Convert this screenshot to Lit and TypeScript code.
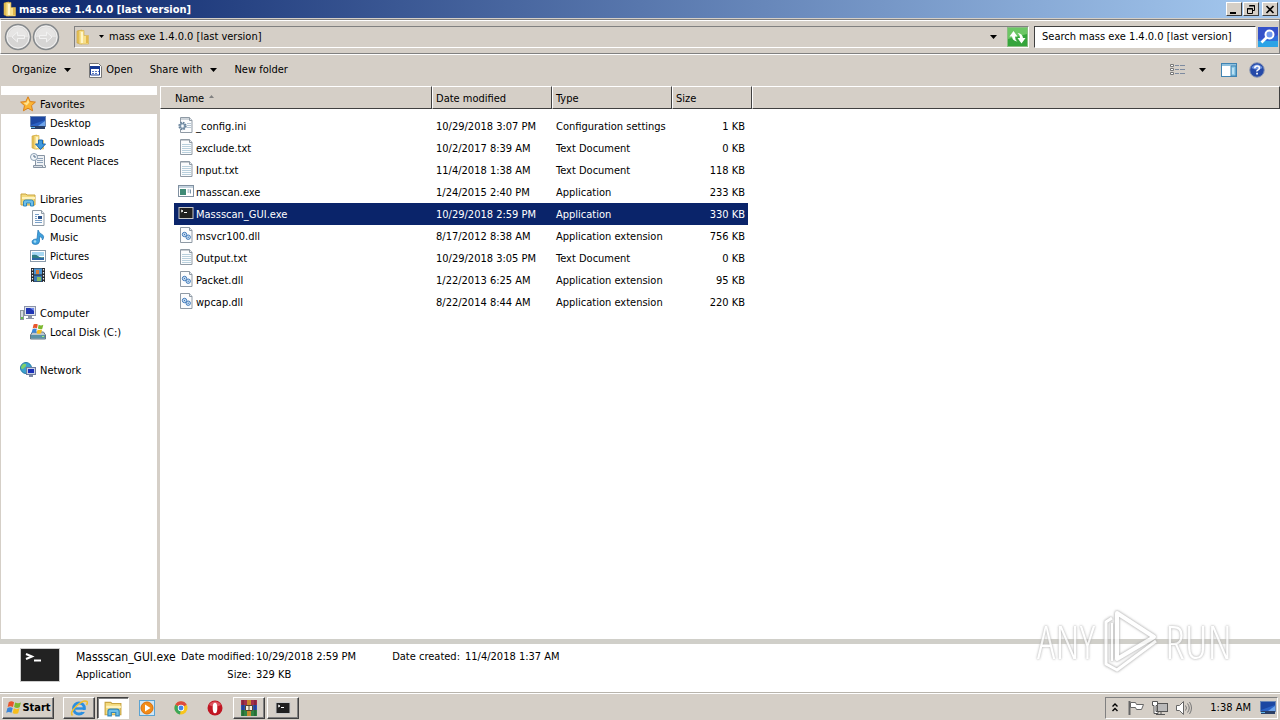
import { LitElement, html, svg, css, TemplateResult } from "lit";
import { customElement, state } from "lit/decorators.js";
import { classMap } from "lit/directives/class-map.js";

const box = (w: number, h: number, body: unknown, vb?: string) => html`<svg
  width=${w} height=${h} viewBox=${vb ?? `0 0 ${w} ${h}`} aria-hidden="true">${body}</svg>`;

const page = svg`
  <path d="M2.500.5h9l2.500 3v12h-11.500z" fill="#fbfcfd" stroke="#8f9aa5"/>
  <path d="M11.500.5v3h2.500" fill="#e4e9ee" stroke="#8f9aa5"/>`;
const folder = svg`
  <path d="M2 2l5-1v14l-5-1z" fill="#e9c75c" stroke="#c99f35" stroke-width=".6"/>
  <path d="M4 1.500h5v5h4.500v8.500h-9.500z" fill="#f7e08c" stroke="#d3ac45" stroke-width=".6"/>
  <path d="M6 3h2v11h-2z" fill="#fff6c9"/><path d="M11 7h2v7h-2z" fill="#e3b94c"/>`;
const monitor = svg`
  <rect x=".5" y="1.500" width="15" height="10" fill="#2b62c4" stroke="#6b87b5"/>
  <path d="M1 2h14v3l-14 5z" fill="#1c47a2"/><path d="M8 11l7-5v5z" fill="#6fa5ec"/>
  <path d="M1 11h14v3h-14z" fill="#2a3f66"/><path d="M1 12h4v1h-4z" fill="#5fb4e8"/>`;
const flag = svg`
  <path d="M3 3c2-1.500 3.500-1 5 0l-1 4.500c-2-1-3-1-5 0z" fill="#e8552b"/>
  <path d="M9 3.300c2 1 3.500 1 5.500 0l-1.200 4.500c-2 1-3.500 .8-5.200-.2z" fill="#7cb82f"/>
  <path d="M1.800 8.500c2-1.200 3.300-1 5 0l-1.200 4.500c-1.800-1-3-1-5 0z" fill="#3b86d8"/>
  <path d="M7.800 8.800c1.800 1 3.300 1 5.300 0l-1.200 4.500c-2 1-3.500 .8-5.200-.2z" fill="#f7be1c"/>`;
const library = svg`
  <path d="M1 3h5l1 1h8v10h-14z" fill="#f3da7c" stroke="#c9a441"/>
  <path d="M2 6h13v2h-13z" fill="#fff3bd"/>
  <path d="M3.500 15v-4q0-2 2-2h6q2 0 2 2v4h-3v-3h-4v3z" fill="#6dbfe9" stroke="#3287bb"/>`;
const round = svg`
  <circle cx="14" cy="14" r="12.500" fill="#cfcecd" stroke="#85898c" stroke-width="1.500"/>
  <circle cx="14" cy="14" r="11" fill="#d6d5d4" stroke="#f3f3f3"/>
  <path d="M4 14a10 10 0 0 1 20 0z" fill="#e6e5e4"/>
  <path d="M8 14l5.500-5v3.500h7v3h-7v3.500z" fill="#dedddc" stroke="#f2f2f2"/>`;

const icons: Record<string, () => TemplateResult> = {
  folder: () => box(16, 16, folder),
  star: () => box(16, 16, svg`<path d="M8 .8l2.200 4.700 5.200.6-3.900 3.500 1.100 5.200-4.600-2.600-4.600 2.600 1.100-5.200-3.900-3.500 5.200-.6z" fill="#fbb534" stroke="#d9801d"/><path d="M8 3l1.300 3.500-2.600 3-3-2.500 3-.6z" fill="#ffe391"/>`),
  desktop: () => box(16, 16, monitor),
  downloads: () => box(16, 16, svg`${folder}<path d="M8.500 6h4v4h3l-5 5.500-5-5.500h3z" fill="#3f9ade" stroke="#1d66ab"/>`),
  recent: () => box(16, 16, svg`<path d="M5.500 2.500h9v10h1v2h-10z" fill="#eef1f4" stroke="#8794a3"/><path d="M7 5.500h6m-6 2h6m-6 2h6" stroke="#8fa3ba"/><path d="M3.500 12.500h9v2h-9z" fill="#d9dfe6" stroke="#8794a3"/><circle cx="4" cy="4" r="3.500" fill="#f3f7fa" stroke="#8b9fb3"/><path d="M4 2v2h2" fill="none" stroke="#506a86"/>`),
  library: () => box(16, 16, library),
  documents: () => box(16, 16, svg`${page}<path d="M5 4.500h4M5 6.500h2m-2 2h2m-2 2h7m-7 2h7" stroke="#7aa0c8"/><path d="M8 6h4v3h-4z" fill="#2d548c"/>`),
  music: () => box(16, 16, svg`<path d="M8 1q1 3 4 4.500t.5 5.500q0-3-3-3.500v5q-.5 3-4 3t-3.500-2.500q0-3 5-3z" fill="#3ea0dc" stroke="#1f72b4" stroke-width=".7"/><circle cx="5" cy="12.500" r="1.300" fill="#a5dcf5"/>`),
  pictures: () => box(16, 16, svg`<rect x=".5" y="2.500" width="15" height="11" fill="#fff" stroke="#8a9bab"/><path d="M2 4h12v4h-12z" fill="#a6d7f2"/><path d="M2 7q4-1 6 1t6 1v3h-12z" fill="#2f7d82"/><path d="M2 10h12v2h-12z" fill="#2d67a6"/>`),
  videos: () => box(16, 16, svg`<path d="M1 1h14v14h-14z" fill="#25282e"/><path d="M4 1.500h8v6h-8z" fill="#4b95d4"/><path d="M4 8.500h8v6h-8z" fill="#3a78b6"/><path d="M6 3h3v4h-3z" fill="#d47c3c"/><path d="M7 10h4v4h-4z" fill="#86bb61"/><path d="M2.500 2v13M13.500 2v13" stroke="#e9eef2" stroke-width="1.200" stroke-dasharray="1.500 1.500"/>`),
  computer: () => box(16, 16, svg`<rect x="4.500" y="1.500" width="11" height="9" fill="#dfe4ee" stroke="#8b93a8"/><path d="M6 3h8v6h-8z" fill="#2035b4"/><path d="M10 3h4v3z" fill="#6d86ea"/><path d="M8 11h4v2h2v1h-8v-1h2z" fill="#8b93a8"/><rect x=".5" y="5.500" width="3" height="9" fill="#d5dbe0" stroke="#8d969e"/><path d="M1 12h2v2h-2z" fill="#64b84f"/>`),
  disk: () => box(16, 16, svg`<path d="M.5 11l2-3h11l2 3v4h-15z" fill="#bcc7d0" stroke="#647683"/><path d="M1 11h14v3.500h-14z" fill="#5b92a6"/><path d="M12 12h2v1h-2z" fill="#9df27a"/><g transform="translate(1 -2) scale(.85)">${flag}</g>`),
  network: () => box(16, 16, svg`<circle cx="6" cy="6" r="5.500" fill="#3da2cf" stroke="#267aa6"/><path d="M3 2q4-1 3 2l-3 3q-3 0-1.500-3zM7 6l3 1v3l-3 1z" fill="#7fd06a"/><rect x="6.500" y="5.500" width="9" height="7" fill="#c9d2e6" stroke="#6d7a9c"/><path d="M8 7h6v4h-6z" fill="#1a2fb8"/><path d="M9 13h4v2h-4z" fill="#7b88a5"/>`),
  ini: () => box(16, 16, svg`${page}<path d="M9 6.500h4m-4 2h4m-4 2h4" stroke="#b4c5d3"/><path d="M4 1v2m2-2v2m2-2v2m2-2v2" stroke="#a1adb8"/><circle cx="4.500" cy="9" r="3.200" fill="#dce6ee" stroke="#67829b" stroke-width="2" stroke-dasharray="1.600 .9"/><circle cx="4.500" cy="9" r="2.400" fill="#c8d6e2" stroke="#67829b"/><circle cx="4.500" cy="9" r="1" fill="#fff"/>`),
  txt: () => box(16, 16, svg`${page}<path d="M4 5.500h9m-9 2h9m-9 2h9m-9 2h9m-9 2h9" stroke="#b9d0dd"/><path d="M4 0v2m2-2v2m2-2v2m2-2v2" stroke="#909ba5"/>`),
  app: () => box(16, 16, svg`<rect x=".5" y="2.500" width="15" height="11" fill="#fff" stroke="#8090a0"/><path d="M1 3h14v2h-14z" fill="#c5d3df"/><path d="M2 6h6v6h-6z" fill="#3f8a75"/><path d="M9.500 7h2m-2 2h2m1-2.500v4" stroke="#7f98ad"/>`),
  console: () => box(16, 16, svg`<rect x="1" y="2.500" width="14" height="11" fill="#202020" stroke="#c8c8c8"/><path d="M3 5l2 1-2 1" fill="none" stroke="#fff"/><path d="M6 7.500h3" stroke="#fff"/>`),
  dll: () => box(16, 16, svg`${page}<g fill="#cfe3f5" stroke="#3f79ba"><circle cx="6.500" cy="7.500" r="2.200"/><circle cx="10.200" cy="10.200" r="2.200"/></g><circle cx="6.500" cy="7.500" r=".7" fill="#3f79ba"/><circle cx="10.200" cy="10.200" r=".7" fill="#3f79ba"/>`),
  open: () => box(15, 16, svg`<path d="M1.500 1.500h9l3 3v11h-12z" fill="#fff" stroke="#777"/><path d="M2.500 5h9v8h-9z" fill="#fff" stroke="#173a94"/><path d="M2 4h10v3h-10z" fill="#173a94"/><path d="M4 9.500h2m1 0h2m1 0h1m-7 2h2m1 0h2" stroke="#5577c4"/>`),
  view: () => box(16, 14, svg`<g fill="#fff" stroke="#777"><path d="M.5 1.500h3v2h-3zM.5 5.500h3v2h-3zM.5 9.500h3v2h-3z"/></g><path d="M5 2.500h4m1 0h5M5 6.500h4m1 0h5M5 10.500h4m1 0h5" stroke="#7d8ba0"/>`),
  pane: () => box(16, 14, svg`<rect x=".5" y=".5" width="15" height="13" fill="#fff" stroke="#3f83b2"/><path d="M1 1h14v2h-14z" fill="#8dc0de"/><path d="M10 3h5v10h-5z" fill="#8fcbe8" stroke="#3f83b2"/><path d="M12 5v6" stroke="#e8f7ff"/>`),
  help: () => box(16, 16, svg`<circle cx="8" cy="8" r="7.300" fill="#2549a8" stroke="#8e9ab5"/><path d="M2.500 6a6 6 0 0 1 11 0q-5 3-11 0z" fill="#6f93df"/><path d="M5.800 6.300q0-2.300 2.300-2.300t2.300 2q0 1.200-1.300 1.900t-1.100 1.600" fill="none" stroke="#fff" stroke-width="1.600"/><path d="M7.200 10.800h1.700v1.700h-1.700z" fill="#fff"/>`),
  refresh: () => box(21, 20, svg`<rect x=".5" y=".5" width="20" height="19" fill="#35a53c" stroke="#8bbd83"/><path d="M1 1h19v6l-19 5z" fill="#6cc765"/><path d="M2.500 9.500l4-5.500 4 5.500h-2.500q0 3.500 2.500 5-5-.5-5.500-5z" fill="#fff"/><path d="M18.500 11l-4 5.500-4-5.500h2.500q0-3.500-2.500-5 5 .5 5.500 5z" fill="#fff"/>`),
  search: () => box(20, 20, svg`<path d="M0 0h20v20h-20z" fill="#2f6fdc"/><path d="M0 0h20v8q-10 6-20 4z" fill="#3451c9"/><path d="M0 14h20v6h-20z" fill="#2ba3e6"/><circle cx="11.500" cy="7.500" r="4" fill="#6f97ee" stroke="#fff" stroke-width="2"/><path d="M8.500 10.500l-5 5" stroke="#fff" stroke-width="2.600"/>`),
  back: () => box(28, 28, round),
  forward: () => box(28, 28, svg`<g transform="translate(28 0) scale(-1 1)">${round}</g>`),
  start: () => box(17, 17, flag, "0 0 15 16"),
  ie: () => box(18, 18, svg`<circle cx="9" cy="9.500" r="5.400" fill="none" stroke="#2b8fe0" stroke-width="3"/><path d="M5 9.500h9" stroke="#2b8fe0" stroke-width="2.400"/><path d="M11 11h6v2h-5z" fill="#d5cfc7"/><path d="M2.500 16.500q-3-3 4-9.500t10.500-4.500q1 1-.5 3.500" fill="none" stroke="#f0be2c" stroke-width="1.500"/>`),
  explorer: () => box(18, 18, library, "0 0 16 16"),
  player: () => box(18, 18, svg`<rect x="1.500" y="1.500" width="15" height="15" fill="#cfe6f6" stroke="#5ba3d2"/><circle cx="9" cy="9" r="6" fill="#f28b18" stroke="#d96f0c"/><path d="M7 5.500l5.500 3.500-5.500 3.500z" fill="#fff"/>`),
  chrome: () => box(18, 18, svg`<circle cx="9" cy="9" r="6.500" fill="#f8c51c"/><path d="M9 9L3.300 5.700a6.500 6.500 0 0 1 11.400 0z" fill="#dd4b3e"/><path d="M9 9L3.300 5.700a6.500 6.500 0 0 0 4.700 9.700z" fill="#3ba75a"/><circle cx="9" cy="9" r="3.200" fill="#fff"/><circle cx="9" cy="9" r="2.400" fill="#4285ea"/>`),
  opera: () => box(18, 18, svg`<circle cx="9" cy="9" r="7.500" fill="#c01622"/><path d="M3 6a7 7 0 0 1 12 0q-6 3-12 0z" fill="#dd5560"/><ellipse cx="9" cy="9" rx="2.300" ry="5.300" fill="#fff"/>`),
  rar: () => box(18, 18, svg`<path d="M1 1h16v5h-16z" fill="#a3304b"/><path d="M1 6h16v5h-16z" fill="#2f52b4"/><path d="M1 11h16v6h-16z" fill="#328443"/><path d="M7 1h4v16h-4z" fill="#c98a2c"/><path d="M5.500 6.500h7v5h-7z" fill="#f4f0e0" stroke="#55452e"/><path d="M9 7v4" stroke="#55452e"/><path d="M3 1v16M15 1v16" stroke="#000" stroke-opacity=".35"/>`),
  trayFlag: () => box(16, 16, svg`<path d="M1.500 1v14" stroke="#666" stroke-width="2"/><path d="M2.500 2.500h5l1 2h7l-2 5h-5l-1-2h-5z" fill="#fff" stroke="#666"/>`),
  trayNet: () => box(16, 16, svg`<rect x="5.500" y="3.500" width="10" height="8" fill="#b9b9b9" stroke="#555"/><path d="M4 14.500h9M9 12v2" stroke="#555"/><path d="M.5 1.500h5v4h-1.500v6h2v2h-4v-8h-1.500z" fill="#fff" stroke="#555"/>`),
  volume: () => box(16, 16, svg`<path d="M.5 5.500h3l4-4v13l-4-4h-3z" fill="#fff" stroke="#666"/><path d="M9.500 5.500q2 2.500 0 5M11.500 3.500q3.500 4.500 0 9M13.500 2q4 6 0 12" fill="none" stroke="#777"/>`),
};

const caret = () => box(7, 4, svg`<path d="M0 0h7l-3.500 4z" fill="#000"/>`);

interface Place { label: string; icon: string; children: [string, string][]; }
const places: Place[] = [
  { label: "Favorites", icon: "star", children: [["Desktop", "desktop"], ["Downloads", "downloads"], ["Recent Places", "recent"]] },
  { label: "Libraries", icon: "library", children: [["Documents", "documents"], ["Music", "music"], ["Pictures", "pictures"], ["Videos", "videos"]] },
  { label: "Computer", icon: "computer", children: [["Local Disk (C:)", "disk"]] },
  { label: "Network", icon: "network", children: [] },
];

const files = [
  ["ini", "_config.ini", "10/29/2018 3:07 PM", "Configuration settings", "1 KB"],
  ["txt", "exclude.txt", "10/2/2017 8:39 AM", "Text Document", "0 KB"],
  ["txt", "Input.txt", "11/4/2018 1:38 AM", "Text Document", "118 KB"],
  ["app", "masscan.exe", "1/24/2015 2:40 PM", "Application", "233 KB"],
  ["console", "Massscan_GUI.exe", "10/29/2018 2:59 PM", "Application", "330 KB"],
  ["dll", "msvcr100.dll", "8/17/2012 8:38 AM", "Application extension", "756 KB"],
  ["txt", "Output.txt", "10/29/2018 3:05 PM", "Text Document", "0 KB"],
  ["dll", "Packet.dll", "1/22/2013 6:25 AM", "Application extension", "95 KB"],
  ["dll", "wpcap.dll", "8/22/2014 8:44 AM", "Application extension", "220 KB"],
];

const tasks: [string, string, string][] = [
  ["ie", "Internet Explorer", "raised"],
  ["explorer", "Windows Explorer", "pressed"],
  ["player", "Media Player", ""],
  ["chrome", "Chrome", ""],
  ["opera", "Opera", ""],
  ["rar", "WinRAR", "raised"],
  ["console", "Massscan_GUI", "raised"],
];

@customElement("app-root")
export class AppRoot extends LitElement {
  @state() private selected = "Massscan_GUI.exe";

  static styles = css`
    :host {
      --face: #d5cfc7;
      --dark: #808080;
      display: flex;
      flex-direction: column;
      height: 100vh;
      overflow: hidden;
      background: var(--face);
      color: #000;
      font: 11px/14px "DejaVu Sans Condensed", "Noto Sans", sans-serif;
    }
    * { box-sizing: border-box; }
    svg { display: block; flex: none; }
    button, input { font: inherit; color: inherit; margin: 0; padding: 0; border: 0; background: none; }
    button, .row { display: flex; align-items: center; }
    a { color: inherit; text-decoration: none; }
    .grow { flex: 1; min-width: 0; }
    .title {
      height: 18px; flex: none; padding: 0 2px; gap: 1px; color: #fff;
      background: linear-gradient(90deg, #0a246a, #a6caf0);
    }
    .title h1 { font-size: 11px; line-height: 16px; padding-top: 2px; margin: 0; white-space: nowrap; }
    .win {
      width: 16px; height: 14px; justify-content: center; background: var(--face);
      border: 1px solid; border-color: #fff #404040 #404040 #fff;
    }
    .win.close { margin-left: 2px; }
    .nav {
      height: 35px; flex: none; margin-top: 1px; padding: 0 1px 0 3px; gap: 5px;
      border: 1px solid var(--dark); border-color: var(--dark) var(--dark) var(--dark) #fff;
      box-shadow: inset 0 1px #fff, 0 1px #fff;
    }
    .history { margin-right: 9px; }
    .field { height: 22px; border: 1px solid; border-color: var(--dark) #fff #fff var(--dark); white-space: nowrap; }
    .address .crumb { gap: 5px; margin-left: 8px; }
    .address .drop { width: 20px; height: 18px; justify-content: center; margin-right: 4px; }
    .search { width: 222px; background: #fff; border-color: #404040 #fff #fff #404040; padding: 0 7px; }
    .search input { width: 100%; outline: 0; }
    .search input::placeholder { color: #000; opacity: 1; }
    .nav .go { margin-left: -3px; }
    .tools { height: 32px; flex: none; padding: 0 15px 0 12px; white-space: nowrap; }
    .tools button { gap: 8px; margin-right: 17px; }
    .tools .open { gap: 3px; }
    .tools .end { gap: 12px; }
    .tools .end button { margin: 0; }
    .tools .end .views { gap: 13px; margin-right: 3px; }
    .main { flex: 1; min-height: 0; display: flex; background: #fff; }
    .side {
      width: 160px; flex: none; padding-top: 9px; border-right: 3px solid var(--face);
      border-left: 1px solid var(--face);
    }
    .side ul { list-style: none; margin: 0; padding: 0; }
    .side .group { margin-bottom: 19px; }
    .side a { display: flex; align-items: center; gap: 4px; height: 19px; padding: 1px 0 0 19px; white-space: nowrap; }
    .side li li a { padding-left: 29px; }
    .side svg { margin-bottom: 2px; }
    .side .current { background: var(--face); }
    .list { flex: 1; min-width: 0; }
    table { width: 100%; table-layout: fixed; border-collapse: separate; border-spacing: 0; }
    th {
      height: 23px; padding: 2px 3px 0; text-align: left; font-weight: normal; background: var(--face);
      border: 1px solid; border-color: #fff #404040 #404040 #fff; white-space: nowrap;
    }
    th.name { padding-left: 14px; }
    .sort { display: inline-flex; margin-left: 5px; vertical-align: 4px; }
    tbody::before { content: ""; display: block; height: 6px; }
    td { height: 22px; padding: 2px 4px 0; white-space: nowrap; overflow: hidden; }
    td .row { gap: 2px; }
    td svg { margin-bottom: 4px; }
    td.num { text-align: right; padding-right: 3px; }
    .selected .cell { background: #0a246a; color: #fff; }
    .c-pad { width: 14px; } .c-name { width: 258px; } .c-mid { width: 120px; }
    .c-size { width: 76px; } .c-end { width: 4px; }
    .details {
      flex: none; height: 53px; border-top: 5px solid #d0cfc9; background: #fff;
      display: flex; align-items: flex-start; padding: 4px 20px 0; gap: 16px;
    }
    .facts {
      display: grid; grid-template-columns: 100px 70px 98px 101px auto; column-gap: 5px;
      grid-auto-rows: 18px; align-items: center; white-space: nowrap;
    }
    .facts .big { font-size: 12px; }
    .facts .label { text-align: right; }
    .taskbar {
      flex: none; height: 28px; padding: 2px 2px 0; border-top: 1px solid #b8b4ac;
      box-shadow: inset 0 1px #fff;
    }
    .task { width: 32px; height: 22px; justify-content: center; margin-right: 2px; border: 1px solid transparent; }
    .raised, .start { border: 1px solid; border-color: #fff #404040 #404040 #fff; box-shadow: inset -1px -1px var(--dark); }
    .pressed { background: #fff; border-color: #404040 #fff #fff #404040; box-shadow: inset 1px 1px var(--dark); }
    .start { width: 52px; height: 22px; justify-content: center; font-weight: bold; margin-right: 9px; }
    .tray { height: 22px; padding: 0 1px 0 6px; gap: 8px; border: 1px solid; border-color: var(--dark) #fff #fff var(--dark); }
    .tray .more { margin-right: 2px; }
    .clock { margin: 0 1px 0 10px; white-space: nowrap; }
    .mark {
      position: absolute; right: 48px; bottom: 47px; display: flex; align-items: center; gap: 6px;
      font: 300 46px/64px "Open Sans Condensed Light", "Open Sans Condensed", "Liberation Sans Narrow", sans-serif;
      color: #fff; opacity: .8; pointer-events: none;
      text-shadow: 0 0 2px #aaa, 0 0 3px #bbb;
    }
    .mark svg { filter: drop-shadow(0 0 1px #aaa) drop-shadow(0 0 1px #bbb); }
  `;

  render() {
    return html`
      <header class="title row">
        ${icons.folder()}
        <h1 class="grow">mass exe 1.4.0.0 [last version]</h1>
        <button class="win" aria-label="Minimize">${box(10, 9, svg`<path d="M1 7h6v2h-6z"/>`)}</button>
        <button class="win" aria-label="Restore">${box(10, 9, svg`<path d="M3.500.5h5v5h-2M3 1h6" fill="none" stroke="#000"/><path d="M1.500 3.500h5v5h-5zM1 4h6" fill="none" stroke="#000"/>`)}</button>
        <button class="win close" aria-label="Close">${box(10, 9, svg`<path d="M1.500 1l7 7m0-7l-7 7" stroke="#000" stroke-width="1.600"/>`)}</button>
      </header>
      <nav class="nav row" aria-label="Address">
        <div class="history row">
          <button aria-label="Back">${icons.back()}</button>
          <button aria-label="Forward">${icons.forward()}</button>
        </div>
        <div class="field address row grow">
          ${icons.folder()}
          <button class="crumb">${box(5, 3, svg`<path d="M0 0h5l-2.500 3z"/>`)}mass exe 1.4.0.0 [last version]</button>
          <span class="grow"></span>
          <button class="drop" aria-label="Previous locations">${caret()}</button>
          <button aria-label="Refresh">${icons.refresh()}</button>
        </div>
        <div class="field search row"><input type="text" aria-label="Search" placeholder="Search mass exe 1.4.0.0 [last version]"></div>
        <button class="go" aria-label="Start search">${icons.search()}</button>
      </nav>
      <div class="tools row">
        <button>Organize ${caret()}</button>
        <button class="open">${icons.open()}Open</button>
        <button>Share with ${caret()}</button>
        <button>New folder</button>
        <span class="grow"></span>
        <div class="end row">
          <button class="views" aria-label="Change your view">${icons.view()}${caret()}</button>
          <button aria-label="Preview pane">${icons.pane()}</button>
          <button aria-label="Help">${icons.help()}</button>
        </div>
      </div>
      <main class="main">
        <nav class="side" aria-label="Places">
          <ul>${places.map((p, i) => html`<li class="group">
            <a href="#" class=${classMap({ current: i === 0 })}>${icons[p.icon]()}${p.label}</a>
            <ul>${p.children.map(([label, icon]) => html`<li><a href="#">${icons[icon]()}${label}</a></li>`)}</ul>
          </li>`)}</ul>
        </nav>
        <div class="list">
          <table>
            <colgroup><col class="c-pad"><col class="c-name"><col class="c-mid"><col class="c-mid"><col class="c-size"><col class="c-end"><col></colgroup>
            <thead><tr>
              <th class="name" colspan="2">Name<span class="sort">${box(5, 3, svg`<path d="M0 3h5l-2.500-3z" fill="#808080"/>`)}</span></th>
              <th>Date modified</th><th>Type</th><th colspan="2">Size</th><th></th>
            </tr></thead>
            <tbody>${files.map(([icon, name, date, type, size]) => html`
              <tr class=${classMap({ selected: name === this.selected })} @click=${() => (this.selected = name)}>
                <td></td>
                <td class="cell"><div class="row">${icons[icon]()}${name}</div></td>
                <td class="cell">${date}</td><td class="cell">${type}</td><td class="cell num">${size}</td>
                <td></td><td></td>
              </tr>`)}</tbody>
          </table>
        </div>
      </main>
      <section class="details">
        ${box(40, 34, svg`<rect x=".5" y=".5" width="39" height="33" fill="#222" stroke="#ccc"/><path d="M6 6l6 2.500-6 2.500" fill="none" stroke="#fff" stroke-width="2"/><path d="M14 12.500h7" stroke="#fff" stroke-width="2"/>`)}
        <div class="facts">
          <span class="big">Massscan_GUI.exe</span>
          <span class="label">Date modified:</span><span>10/29/2018 2:59 PM</span>
          <span class="label">Date created:</span><span>11/4/2018 1:37 AM</span>
          <span>Application</span>
          <span class="label">Size:</span><span>329 KB</span>
        </div>
      </section>
      <footer class="taskbar row">
        <button class="start">${icons.start()}Start</button>
        ${tasks.map(([icon, label, look]) => html`<button class="task ${look}" aria-label=${label}>${icons[icon]()}</button>`)}
        <span class="grow"></span>
        <div class="tray row">
          <button class="more" aria-label="Show hidden icons">${box(6, 9, svg`<path d="M.5 3.500l2.500-2.500 2.500 2.500M.5 8l2.500-2.500 2.500 2.500" fill="none" stroke="#000" stroke-width="1.400"/>`)}</button>
          <button aria-label="Action center">${icons.trayFlag()}</button>
          <button aria-label="Network">${icons.trayNet()}</button>
          <button aria-label="Volume">${icons.volume()}</button>
          <span class="clock">1:38 AM</span>
          <button aria-label="Show desktop">${icons.desktop()}</button>
        </div>
      </footer>
      <div class="mark">
        <span>ANY</span>
        ${box(58, 64, svg`<path d="M11 9l-6 4v42l11 6 39-29" fill="none" stroke="#fff" stroke-width="3" stroke-linejoin="round"/><path d="M16 4l37 24-37 22z" fill="none" stroke="#fff" stroke-width="4" stroke-linejoin="round"/><path d="M11 14v38" stroke="#fff" stroke-width="2"/>`)}
        <span>RUN</span>
      </div>
    `;
  }
}
